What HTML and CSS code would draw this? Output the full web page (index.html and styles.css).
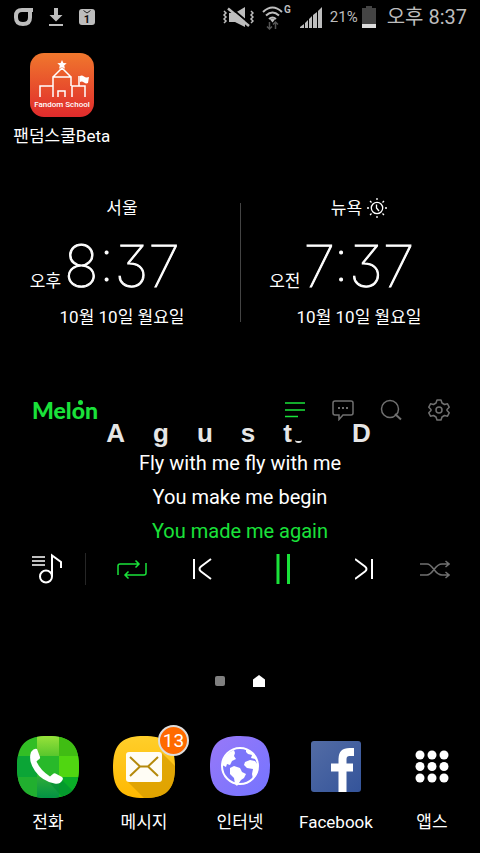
FILE: index.html
```html
<!DOCTYPE html>
<html lang="ko">
<head>
<meta charset="utf-8">
<meta name="viewport" content="width=device-width, initial-scale=1">
<title>홈 화면</title>
<link rel="stylesheet" href="styles.css">
</head>
<body>
<header class="status">
  <div class="status-group notices">
    <svg width="20" height="20" viewBox="0 0 20 20" fill="none" stroke="#bdbdbd" stroke-width="4"><path d="M20 3H9C5 3 3 5 3 9v1.500q0 6.500 7 6.500t7-6.500V3"/></svg>
    <svg width="16" height="20" viewBox="0 0 16 20" fill="#bdbdbd"><path d="M6 1h4v7h4.500L8 14.500 1.500 8H6zM1 17h14v2H1z"/></svg>
    <svg width="16" height="18" viewBox="0 0 16 18"><rect y="1" width="16" height="16" rx="3" fill="#bdbdbd"/><path d="M4.500 2.500 8 5l3.500-2.500" fill="none" stroke="#222"/><text x="8" y="15" text-anchor="middle" class="calendar-day">1</text></svg>
  </div>
  <div class="status-group system">
    <svg width="32" height="24" viewBox="0 0 32 24" fill="none" stroke="#bdbdbd" stroke-width="1.500"><path d="M2 6l2 2-2 2 2 2-2 2 2 2-2 2M29 6l2 2-2 2 2 2-2 2 2 2-2 2"/><path d="M7 8h6l10-6v20l-10-5H7z" fill="#bdbdbd" stroke="none"/><path d="M8 2l20 17" stroke="#000" stroke-width="2"/><path d="M6 3.500l21 17.500" stroke-width="2.500"/></svg>
    <svg width="30" height="26" viewBox="0 0 30 26" fill="none" stroke="#bdbdbd" stroke-width="2"><path d="M1 8Q10.500-1 20 8M4 11.500q6.500-6 13 0M7 15q3.500-3 7 0"/><path d="M8 15.500l2.500 3 2.500-3q-2.500-2-5 0" fill="#bdbdbd" stroke="none"/><path d="M7.500 18v7M5 22.500 7.500 25l2.500-2.500M13.500 25v-7M11 20.500l2.500-2.500 2.500 2.500" stroke="#555" stroke-width="1.500"/><text x="22" y="9" class="network">G</text></svg>
    <svg width="22" height="22" viewBox="0 0 22 22" fill="#bdbdbd"><path d="M0 22v-1l4-3v4zM5 22v-5l3-3v8zM9 22v-9l3-3v12zM13 22V9l4-3v16zM18 22V5l4-4v21z"/></svg>
    <span class="percent">21%</span>
    <svg width="14" height="22" viewBox="0 0 14 22"><path d="M4 0h6v2h4v20H0V2h4z" fill="#444"/><path d="M0 18h14v4H0z" fill="#ddd"/></svg>
    <time class="now">오후 8:37</time>
  </div>
</header>

<main class="home">
  <section class="apps">
    <a class="app" href="#fandom">
      <svg width="64" height="64" viewBox="0 0 64 64"><defs><linearGradient id="fan" x2="0" y2="1"><stop stop-color="#f0772d"/><stop offset="1" stop-color="#e02b2c"/></linearGradient></defs><rect width="64" height="64" rx="14" fill="url(#fan)"/><g fill="none" stroke="#fff" stroke-width="1.500"><path d="M10 44V33h13v11M55 44V33H42v11M23 33v-9h18v9M23 24l9-9 9 9M28 44v-6h7v6M49 33V23"/></g><path d="M32 7l1.400 3 3.300.3-2.500 2.200.8 3.300-3-1.700-3 1.700.8-3.300-2.500-2.200 3.300-.3zM50 23q2-1 4 .5t5 .5l-1 6q-2 1-4-.5T50 29z" fill="#fff"/><text x="32" y="54" text-anchor="middle" class="fandom-name">Fandom School</text></svg>
      <span class="label">팬덤스쿨Beta</span>
    </a>
  </section>

  <section class="clocks">
    <div class="clock">
      <h2 class="city">서울</h2>
      <div class="reading"><span class="meridiem">오후</span><time class="digits">8:37</time></div>
      <p class="date">10월 10일 월요일</p>
    </div>
    <div class="clock">
      <h2 class="city">뉴욕
        <svg width="20" height="20" viewBox="0 0 20 20" fill="none" stroke="#fff" stroke-width="1.300"><circle cx="10" cy="10" r="5.700"/><path d="M9.500 6.500V10l2.500 3M10 0v2M10 18v2M0 10h2M18 10h2M3 3l1.500 1.500M15.500 15.500 17 17M17 3l-1.500 1.500M4.500 15.500 3 17"/></svg>
      </h2>
      <div class="reading"><span class="meridiem">오전</span><time class="digits">7:37</time></div>
      <p class="date">10월 10일 월요일</p>
    </div>
  </section>

  <section class="player">
    <div class="player-head">
      <a class="brand" href="#melon">Mel<span class="dotted">o</span>n</a>
      <nav class="tools">
        <button aria-label="가사"><svg width="22" height="22" viewBox="0 0 22 22" stroke="#1ae23a" stroke-width="1.500"><path d="M1 4h20M1 11h20M1 17.500h13"/></svg></button>
        <button aria-label="댓글"><svg width="22" height="22" viewBox="0 0 22 22" fill="none" stroke="#707070" stroke-width="1.500"><path d="M3 2h16q2 0 2 2v10q0 2-2 2h-8l-4 4.500V16H3q-2 0-2-2V4q0-2 2-2z"/><path d="M6 9h2M10 9h2M14 9h2" stroke-width="2"/></svg></button>
        <button aria-label="검색"><svg width="22" height="22" viewBox="0 0 22 22" fill="none" stroke="#707070" stroke-width="1.500"><circle cx="10" cy="10" r="8.500"/><path d="M15 15l6 5.500" stroke-width="2"/></svg></button>
        <button aria-label="설정"><svg width="22" height="22" viewBox="0 0 22 22" fill="none" stroke="#707070" stroke-width="1.500" stroke-linejoin="round"><path d="M9 1h4l1 3 2.500 1.500 3-.7 1.700 3.400L19 10.500v1l2.200 2.300-1.700 3.400-3-.7L14 18l-1 3H9l-1-3-2.500-1.500-3 .7-1.700-3.400L3 11.500v-1L.8 8.200l1.700-3.400 3 .7L8 4z"/><circle cx="11" cy="11" r="3"/></svg></button>
      </nav>
    </div>
    <h2 class="artist"><span>A</span><span>g</span><span>u</span><span>s</span><span class="last">t</span><span class="blank"> </span><span>D</span></h2>
    <div class="lyrics">
      <p>Fly with me fly with me</p>
      <p>You make me begin</p>
      <p class="current">You made me again</p>
    </div>
    <div class="controls">
      <button class="list" aria-label="재생목록"><svg width="32" height="32" viewBox="0 0 32 32" fill="none" stroke="#fff" stroke-width="1.500"><path d="M2 4h13M2 8h13M2 12h13"/><circle cx="16" cy="23.500" r="6" stroke-width="2"/><path d="M22 23V2.500L31 9v6" stroke-width="2"/></svg></button>
      <div class="transport">
        <button aria-label="반복"><svg width="30" height="32" viewBox="0 0 30 32" fill="none" stroke="#1ae23a" stroke-width="1.500"><path d="M1 22v-9q0-2 2-2h19M18.500 7.500 22 11l-3.500 3.500M29 10v10q0 2-2 2H8M11.500 18.500 8 22l3.500 3.500"/></svg></button>
        <button class="previous" aria-label="이전"><svg width="20" height="32" viewBox="0 0 20 32" fill="none" stroke="#fff" stroke-width="2"><path d="M2 6v20M19 6 9 13.500q-3 2.500 0 5L19 26"/></svg></button>
        <button aria-label="일시정지"><svg width="16" height="32" viewBox="0 0 16 32" stroke="#1ae23a" stroke-width="3"><path d="M2 1v30M12.500 1v30"/></svg></button>
        <button class="next" aria-label="다음"><svg width="20" height="32" viewBox="0 0 20 32" fill="none" stroke="#fff" stroke-width="2"><path d="M17 6v20M0 6l10 7.500q3 2.500 0 5L0 26"/></svg></button>
        <button aria-label="임의재생"><svg width="30" height="32" viewBox="0 0 30 32" fill="none" stroke="#707070" stroke-width="1.500"><path d="M0 11h7q3 0 7 5.500t8 5.500h7M0 22h7q3 0 7-5.500t8-5.500h7M25.500 8l3.500 3-3.500 3M25.500 19l3.500 3-3.500 3"/></svg></button>
      </div>
    </div>
  </section>

  <nav class="pager">
    <a class="page" href="#page1" aria-label="1 페이지"></a>
    <a class="page-home" href="#home" aria-label="홈"><svg width="12" height="12" viewBox="0 0 12 12" fill="#fff"><path d="M0 4.500 6 0l6 4.500V12H0z"/></svg></a>
  </nav>

  <nav class="dock">
    <a class="app" href="#phone">
      <svg width="64" height="64" viewBox="0 0 64 64"><defs><clipPath id="sq"><path d="M32 1C53 1 63 8 63 32S53 63 32 63 1 56 1 32 11 1 32 1z"/></clipPath><linearGradient id="g1" x2="0" y2="1"><stop stop-color="#9be33b"/><stop offset=".33" stop-color="#58c62c"/><stop offset="1" stop-color="#009145"/></linearGradient></defs><g clip-path="url(#sq)"><path d="M0 0h64v64H0z" fill="#32be25"/><path d="M21 0h22v64H21z" fill="url(#g1)"/><path d="M43 0h21v21H43z" fill="#40bd13"/><path d="M0 21h21v21H0z" fill="#0ba536"/><path d="M21 21h22v21H21z" fill="#28b92a"/><path d="M43 21h21v21H43z" fill="#50d611"/><path d="M0 42h21v22H0z" fill="#21af2f"/><path d="M43 42h21v22H43z" fill="#0aae27"/><path d="M45 44l17 17-14 3-14-16z" fill="#008a33" opacity=".55"/></g><path d="M15 17q3-4 6-3l3 8q.5 2-2 3l-1.500 1.500q4 9 13.500 15L37 39q1-1 2.500-.5L46 42q1.500 1 .5 3-3 5-8 3.500Q26 46 19 36T15 17z" fill="#fff"/></svg>
      <span class="label">전화</span>
    </a>
    <a class="app" href="#messages">
      <span class="icon"><svg width="64" height="64" viewBox="0 0 64 64"><defs><linearGradient id="yl" x2="0" y2="1"><stop stop-color="#ffcf2b"/><stop offset="1" stop-color="#ffb800"/></linearGradient></defs><g clip-path="url(#sq)"><path d="M0 0h64v64H0z" fill="url(#yl)"/><path d="M15 46l35-28 14 14v32H33z" fill="#d79c00" opacity=".75"/></g><rect x="14" y="17" width="36" height="30" rx="3" fill="#fffdf5"/><path d="M18 22l10 9.500h8L46 22M18 41l10-9.500M46 41l-10-9.500" fill="none" stroke="#b58a0c" stroke-width="2"/></svg><span class="badge">13</span></span>
      <span class="label">메시지</span>
    </a>
    <a class="app" href="#internet">
      <svg width="64" height="64" viewBox="0 0 64 64"><defs><linearGradient id="pu" x2="1" y2="1"><stop stop-color="#9878f8"/><stop offset="1" stop-color="#7474ff"/></linearGradient></defs><path d="M32 1C52 1 62 8 62 31S52 61 32 61 2 54 2 31 12 1 32 1z" fill="url(#pu)"/><circle cx="32" cy="31" r="19" fill="#7b76fa"/><path d="M14 30q1-11 12-15l1 3-1 3 2 3-4 2-2 4-3-1-1 3-2-1zM38 14q10 3 12 15l-3-5-4-1 1-3-4-1-2-2zM22 33l4-2 6 2 2 4 4 2-2 4-3 2-4 6-2-2-1-6-4-4zM37 27l5-2 5 1 3 4-1 9-4 5-1-5 1-5-6-1-3-3z" fill="#fff"/><circle cx="32" cy="31" r="18" fill="none" stroke="#fff" stroke-width="2"/></svg>
      <span class="label">인터넷</span>
    </a>
    <a class="app" href="#facebook">
      <svg width="64" height="64" viewBox="0 0 64 64"><defs><linearGradient id="fb" x2="1" y2="1"><stop stop-color="#536ca5"/><stop offset="1" stop-color="#34549a"/></linearGradient></defs><rect x="7" y="6" width="50" height="51" rx="3" fill="url(#fb)"/><path d="M38.500 57V24q0-7 7-7H50M27 32.500h22" fill="none" stroke="#fff" stroke-width="8"/></svg>
      <span class="label">Facebook</span>
    </a>
    <a class="app" href="#apps">
      <svg width="64" height="64" viewBox="0 0 64 64" fill="#fff"><circle cx="20" cy="20" r="4.500"/><circle cx="32" cy="20" r="4.500"/><circle cx="44" cy="20" r="4.500"/><circle cx="20" cy="31.500" r="4.500"/><circle cx="32" cy="31.500" r="4.500"/><circle cx="44" cy="31.500" r="4.500"/><circle cx="20" cy="43" r="4.500"/><circle cx="32" cy="43" r="4.500"/><circle cx="44" cy="43" r="4.500"/></svg>
      <span class="label">앱스</span>
    </a>
  </nav>
</main>
</body>
</html>
```

FILE: styles.css
```css
* { box-sizing: border-box; }

body {
  margin: 0;
  background: #000;
  color: #fff;
  font-family: Roboto, "Noto Sans CJK KR", sans-serif;
  font-size: 17px;
}

h2, p { margin: 0; font-weight: 400; }
a { color: inherit; text-decoration: none; }
svg { display: block; }
button { display: block; margin: 0; padding: 0; border: 0; background: none; }

.status {
  display: flex;
  justify-content: space-between;
  height: 33px;
  padding: 0 13px;
  color: #bdbdbd;
}
.status-group { display: flex; align-items: center; }
.notices { gap: 15px; }
.system { gap: 8px; }
.percent { font-size: 15px; margin-right: -4px; }
.now { font-size: 20px; line-height: 32px; margin-left: 3px; }
.calendar-day { font: 700 11px Roboto, sans-serif; fill: #111; }
.network { font: 700 10px Roboto, sans-serif; fill: #bdbdbd; stroke: none; }

.apps {
  display: grid;
  grid-template-columns: repeat(4, 1fr);
  padding: 20px 0 0 2px;
}
.app { display: flex; flex-direction: column; align-items: center; }
.label { line-height: 24px; margin-top: 11px; white-space: nowrap; }
.apps .label { margin-top: 7px; }
.fandom-name { font: 500 8px Roboto, sans-serif; fill: #fff; }

.clocks {
  display: grid;
  grid-template-columns: 1fr 1fr;
  margin-top: 47px;
}
.clock { padding-left: 4px; text-align: center; position: relative; }
.clock + .clock { padding: 0 2px 0 0; }
.clock + .clock::before {
  content: "";
  position: absolute;
  left: 0;
  top: 8px;
  bottom: 8px;
  border-left: 1px solid #444;
}
.city {
  display: flex;
  justify-content: center;
  align-items: center;
  gap: 5px;
  font-size: 17px;
  line-height: 26px;
}
.reading {
  display: grid;
  grid-template-columns: 1fr auto 1fr;
  align-items: baseline;
  margin-top: 15px;
  line-height: 60px;
}
.meridiem { justify-self: end; margin-right: 3px; line-height: 24px; }
.digits {
  font-family: Inter, sans-serif;
  font-weight: 100;
  font-size: 58px;
  font-feature-settings: "cv09";
  -webkit-text-stroke: 1px #fff;
}
.date { margin-top: 8px; line-height: 26px; }

.player { margin-top: 68px; padding: 0 30px; }
.player-head { display: flex; justify-content: space-between; align-items: center; }
.brand {
  padding-left: 2px;
  font: 900 23px/24px Lato, sans-serif;
  color: #1ae23a;
}
.dotted { position: relative; }
.dotted::after {
  content: "";
  position: absolute;
  right: 2px;
  top: 4px;
  width: 5px;
  height: 5px;
  border-radius: 50%;
  background: #1ae23a;
}
.tools { display: flex; gap: 26px; }
.artist {
  display: flex;
  justify-content: center;
  gap: 28px;
  margin-top: -2px;
  padding-right: 3px;
  font: 700 26px/26px "Liberation Sans", Arial, sans-serif;
  color: #e6e6e6;
}
.blank { width: 4px; }
.last { position: relative; }
.last::after {
  content: "";
  position: absolute;
  left: 12px;
  bottom: 3px;
  width: 7px;
  height: 4px;
  border-bottom: 2px solid #e6e6e6;
  border-radius: 50%;
}
.lyrics { font-size: 20px; line-height: 34px; text-align: center; }
.current { color: #1ae23a; }

.controls { display: flex; align-items: center; margin-top: 5px; }
.list { padding-right: 23px; border-right: 1px solid #262626; }
.transport {
  flex: 1;
  display: flex;
  justify-content: space-between;
  padding-left: 31px;
}
.previous { padding-right: 18px; }
.next { padding-left: 18px; }

.pager {
  display: flex;
  justify-content: center;
  align-items: center;
  gap: 28px;
  height: 12px;
  margin-top: 90px;
}
.page { width: 10px; height: 10px; border-radius: 2px; background: #808080; }

.dock {
  display: grid;
  grid-template-columns: repeat(5, 1fr);
  margin-top: 48px;
}
.icon { position: relative; }
.badge {
  position: absolute;
  right: -13px;
  top: -10px;
  width: 31px;
  height: 31px;
  border: 2px solid #ddd;
  border-radius: 50%;
  background: #ff6a00;
  font-size: 19px;
  line-height: 27px;
  text-align: center;
}
```
